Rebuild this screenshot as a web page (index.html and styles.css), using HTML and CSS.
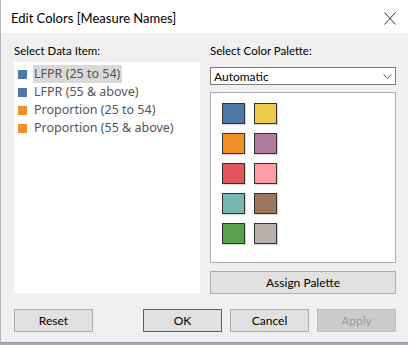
FILE: index.html
```html
<!DOCTYPE html>
<html lang="en">
<head>
<meta charset="UTF-8">
<title>Edit Colors [Measure Names]</title>
<link rel="stylesheet" href="styles.css">
</head>
<body>
<div class="dialog">
<div class="titlebar">
<span class="title">Edit Colors [Measure Names]</span>
<svg class="close" width="12" height="13" viewBox="0 0 12 13"><path d="M0.5 0.5 L11.5 12.5 M11.5 0.5 L0.5 12.5" stroke="#333" stroke-width="1" fill="none"/></svg>
</div>
<div class="content">
<div class="columns">
<div class="col">
<div class="label">Select Data Item:</div>
<div class="itemlist">
<div class="item selected"><span class="chip" style="background:#4e79a7"></span><span class="name">LFPR (25 to 54)</span></div>
<div class="item"><span class="chip" style="background:#4e79a7"></span><span class="name">LFPR (55 &amp; above)</span></div>
<div class="item"><span class="chip" style="background:#f28e2b"></span><span class="name">Proportion (25 to 54)</span></div>
<div class="item"><span class="chip" style="background:#f28e2b"></span><span class="name">Proportion (55 &amp; above)</span></div>
</div>
</div>
<div class="col">
<div class="label">Select Color Palette:</div>
<div class="dropdown">
<span>Automatic</span>
<svg width="9" height="5" viewBox="0 0 9 5"><path d="M0.5 0.5 L4.5 4.5 L8.5 0.5" stroke="#666" fill="none"/></svg>
</div>
<div class="palette">
<div class="swatches">
<span class="swatch" style="background:#4e79a7"></span>
<span class="swatch" style="background:#edc948"></span>
<span class="swatch" style="background:#f28e2b"></span>
<span class="swatch" style="background:#b07aa1"></span>
<span class="swatch" style="background:#e15759"></span>
<span class="swatch" style="background:#ff9da7"></span>
<span class="swatch" style="background:#76b7b2"></span>
<span class="swatch" style="background:#9c755f"></span>
<span class="swatch" style="background:#59a14f"></span>
<span class="swatch" style="background:#bab0ac"></span>
</div>
</div>
<button class="btn assign">Assign Palette</button>
</div>
</div>
<div class="footer">
<button class="btn">Reset</button>
<div class="spacer"></div>
<button class="btn default">OK</button>
<button class="btn">Cancel</button>
<button class="btn disabled">Apply</button>
</div>
</div>
</div>
</body>
</html>
```

FILE: styles.css
```css
body {
margin: 0;
background-color: #a9adb2;
font-family: Lato, sans-serif;
}
.dialog {
width: 407px;
height: 342px;
background-color: #f0f0f0;
border-left: 1px solid #b5b5b5;
border-bottom: 1px solid #9a9a9a;
display: flex;
flex-direction: column;
}
.titlebar {
height: 33px;
box-sizing: border-box;
background-color: #fff;
display: flex;
align-items: center;
justify-content: space-between;
padding: 3px 12px 0 10px;
}
.title {
font-size: 13px;
color: #000;
}
.close {
display: block;
}
.content {
padding: 10px 12px 0 13px;
}
.columns {
display: flex;
gap: 10px;
}
.col {
width: 186px;
display: flex;
flex-direction: column;
}
.label {
font-size: 11.5px;
height: 19px;
line-height: 16px;
color: #000;
}
.itemlist {
height: 231px;
background-color: #fff;
padding-top: 3px;
box-sizing: border-box;
}
.item {
height: 18px;
display: flex;
align-items: center;
padding-left: 4px;
font-family: "Noto Sans", sans-serif;
font-size: 12.5px;
color: #555;
}
.chip {
width: 9px;
height: 9px;
margin-right: 6px;
}
.name {
padding: 0 2px 1px 1px;
line-height: 17px;
}
.item.selected .name {
background-color: #d9d9d9;
}
.dropdown {
margin-top: 5px;
height: 16px;
border: 1px solid #7a7a7a;
background-color: #fff;
display: flex;
align-items: center;
justify-content: space-between;
padding: 0 3px 0 3px;
font-size: 12px;
}
.dropdown svg {
display: block;
}
.palette {
margin-top: 7px;
height: 171px;
box-sizing: border-box;
border: 1px solid #adadad;
background-color: #fff;
padding: 10px 11px;
}
.swatches {
display: grid;
grid-template-columns: 23px 23px;
grid-auto-rows: 21px;
column-gap: 9px;
row-gap: 9px;
}
.swatch {
border: 1px solid #333;
box-sizing: border-box;
box-shadow: 1px 1px 1px rgba(0,0,0,0.15);
}
.btn {
font-family: Lato, sans-serif;
font-size: 12px;
height: 23px;
background-color: #e1e1e1;
border: 1px solid #adadad;
color: #000;
padding: 0;
}
.assign {
margin-top: 8px;
width: 186px;
}
.footer {
display: flex;
gap: 8px;
margin-top: 15px;
}
.footer .btn {
width: 79px;
}
.spacer {
flex: 1;
}
.default {
border-color: #0078d7;
}
.disabled {
background-color: #cccccc;
border-color: #bfbfbf;
color: #9d9d9d;
}
```
